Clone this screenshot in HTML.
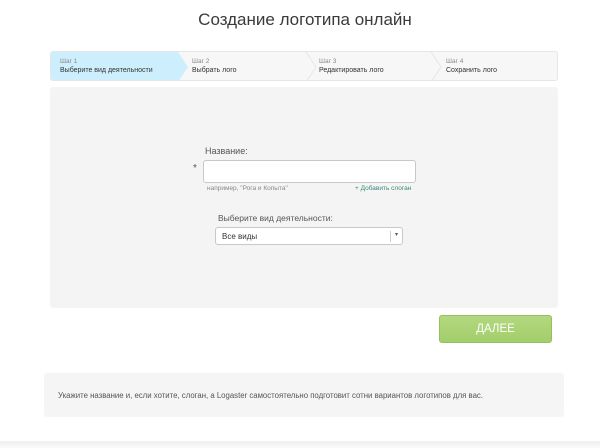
<!DOCTYPE html>
<html><head><meta charset="utf-8"><style>
*{margin:0;padding:0;box-sizing:border-box}
body{width:600px;height:448px;background:#fff;font-family:"Liberation Sans",Arial,sans-serif;position:relative;overflow:hidden;color:#333}
.a{position:absolute}
h1{position:absolute;left:0;width:610px;top:10px;text-align:center;font-weight:normal;font-size:17px;color:#3a3a3a}
.steps{left:50px;top:51px;width:508px;height:30px;border:1px solid #e6e6e6;border-radius:3px;background:#f7f7f7;overflow:hidden}
.st{position:absolute;top:0;height:30px;font-size:6.5px;color:#888;padding:6px 0 0 0}
.st b{display:block;font-weight:normal;font-size:7px;color:#333;margin-top:2px}
.panel{left:50px;top:87px;width:508px;height:221px;background:#f4f4f4;border-radius:3px}
.inp{background:#fff;border:1px solid #c8c8c8;border-radius:3px}
</style></head><body>
<h1>Создание логотипа онлайн</h1>
<div class="a steps">
<svg class="a" style="left:0;top:0" width="140" height="30"><polygon points="0,0 127,0 137,15 127,30 0,30" fill="#cdeefc"/></svg>
<svg class="a" style="left:0;top:0" width="508" height="30"><polyline points="255,0 265,15 255,30" fill="none" stroke="#e6e6e6"/><polyline points="380,0 390,15 380,30" fill="none" stroke="#e6e6e6"/></svg>
<div class="st" style="left:9px">Шаг 1<b>Выберите вид деятельности</b></div>
<div class="st" style="left:141px">Шаг 2<b>Выбрать лого</b></div>
<div class="st" style="left:268px">Шаг 3<b>Редактировать лого</b></div>
<div class="st" style="left:395px">Шаг 4<b>Сохранить лого</b></div>
</div>
<div class="a panel"></div>
<div class="a" style="left:205px;top:146px;font-size:9px;color:#555">Название:</div>
<div class="a" style="left:193px;top:163px;font-size:10px;color:#555">*</div>
<div class="a inp" style="left:203px;top:160px;width:213px;height:23px"></div>
<div class="a" style="left:207px;top:185px;font-size:6.5px;color:#888">например, "Рога и Копыта"</div>
<div class="a" style="left:355px;top:185px;font-size:6.5px;color:#3a8a7a">+ Добавить слоган</div>
<div class="a" style="left:218px;top:213px;font-size:8.5px;color:#555">Выберите вид деятельности:</div>
<div class="a inp" style="left:215px;top:227px;width:188px;height:18px"><span class="a" style="left:6px;top:4px;font-size:8px;color:#333">Все виды</span><span class="a" style="left:174px;top:3px;width:1px;height:11px;background:#ccc"></span><span class="a" style="left:179px;top:3px;font-size:6px;color:#555">▾</span></div>
<div class="a" style="left:439px;top:315px;width:113px;height:28px;background:linear-gradient(#b3d87f,#a3ce6c);border:1px solid #95c05e;border-radius:3px;color:#fff;font-size:11.5px;text-align:center;line-height:26px">ДАЛЕЕ</div>
<div class="a" style="left:44px;top:373px;width:520px;height:44px;background:#f5f5f5;border-radius:3px"></div>
<div class="a" style="left:58px;top:391px;font-size:7.8px;color:#555">Укажите название и, если хотите, слоган, а Logaster самостоятельно подготовит сотни вариантов логотипов для вас.</div>
<div class="a" style="left:0;top:441px;width:600px;height:7px;background:linear-gradient(#eee,#fafafa)"></div>
</body></html>
